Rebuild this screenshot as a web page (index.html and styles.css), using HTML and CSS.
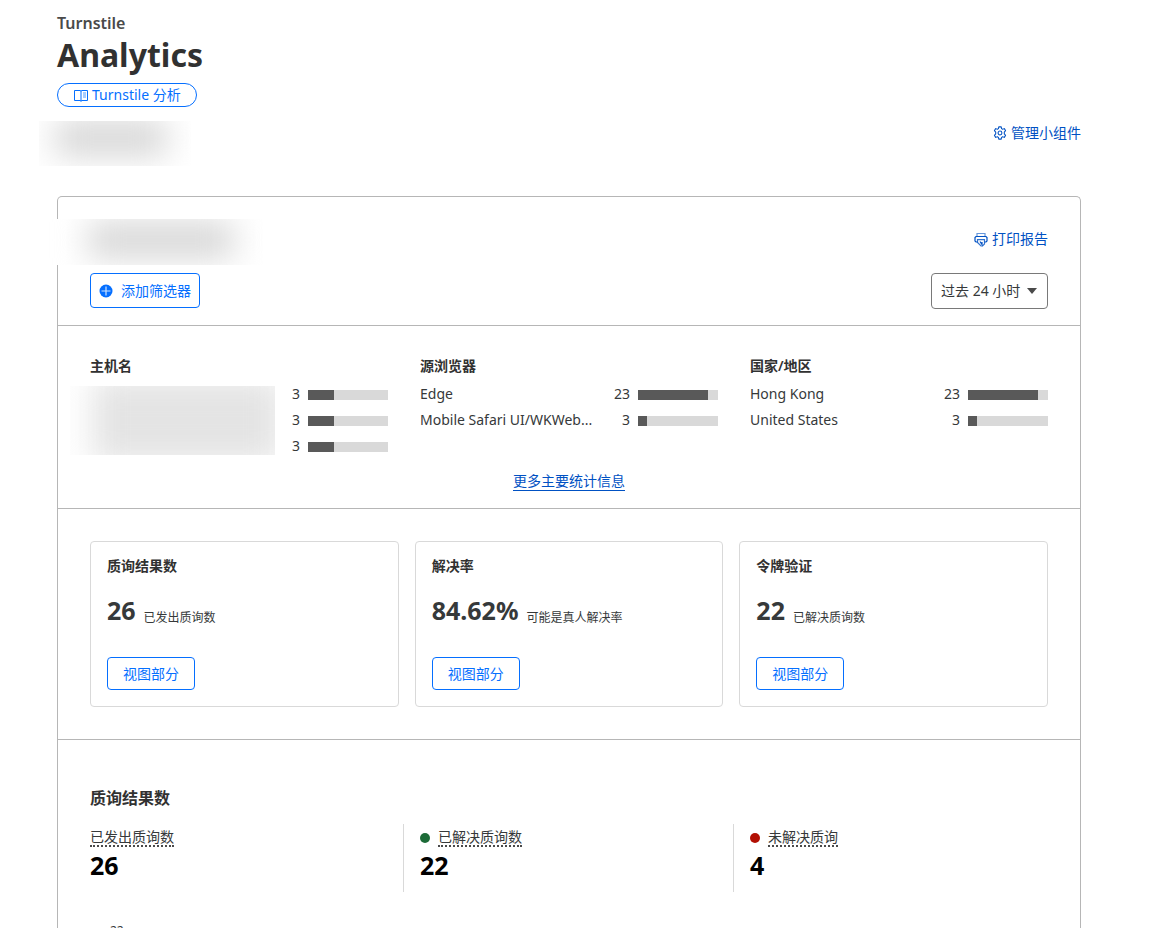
FILE: index.html
```html
<!DOCTYPE html>
<html lang="zh-CN">
<head>
  <meta charset="UTF-8">
  <meta name="viewport" content="width=device-width, initial-scale=1.0">
  <title>Turnstile Analytics</title>
  <link rel="stylesheet" href="styles.css">
</head>
<body>
  <main class="page">
    <header class="page-header">
      <p class="product">Turnstile</p>
      <h1>Analytics</h1>
      <a class="docs-link" href="#docs">
        <svg viewBox="0 0 14 13" width="14" height="13" fill="none" stroke="currentColor">
          <path d="M.5 1.500H6L7 2l1-.5h5.500v10H8l-1 .5-1-.5H.5zM7 2v10.500"/>
          <path d="M9 4h3M9 6h3M9 8h3" opacity=".7"/>
        </svg>
        Turnstile 分析
      </a>
    </header>

    <div class="account-bar">
      <div class="redacted redacted-account"></div>
      <a class="action-link" href="#widgets">
        <svg viewBox="0 0 16 16" width="14" height="14" fill="none" stroke="currentColor" stroke-width="1.200" stroke-linejoin="round">
          <path d="M6.600 1h2.800l.4 2 1.200.7 2-.7 1.400 2.400L12.900 7v2l1.500 1.600L13 13l-2-.7-1.200.7-.4 2H6.600l-.4-2-1.200-.7-2 .7-1.400-2.400L3.100 9V7L1.600 5.400 3 3l2 .7L6.200 3z"/>
          <circle cx="8" cy="8" r="2.200"/>
        </svg>
        管理小组件
      </a>
    </div>

    <div class="panel">
      <section class="toolbar">
        <div class="toolbar-row">
          <div class="redacted redacted-site"></div>
          <a class="action-link print-link" href="#print">
            <svg viewBox="0 0 14 15" width="14" height="15" fill="none" stroke="currentColor" stroke-width="1.200">
              <path d="M3 4.500V1.500h8v3" opacity=".6"/>
              <path d="M3.500 10H2L1 9V5.500l1-1h10l1 1V9l-1 1h-1.500"/>
              <path d="M3.500 7.600h7V12L8.500 14H7l-3.500-3.500z" opacity=".8"/>
              <path d="M6 9.500l2 3V10"/>
            </svg>
            打印报告
          </a>
        </div>
        <div class="toolbar-row">
          <button class="btn btn-filter" type="button">
            <svg viewBox="0 0 14 14" width="14" height="14">
              <circle cx="7" cy="7" r="6.500" fill="currentColor"/>
              <path d="M7 2.500v9M2.500 7h9" stroke="#fff" stroke-width="1.200" opacity=".8"/>
            </svg>
            添加筛选器
          </button>
          <div class="range">
            <select aria-label="时间范围">
              <option>过去 24 小时</option>
              <option>过去 7 天</option>
              <option>过去 30 天</option>
            </select>
            <svg viewBox="0 0 10 6" width="10" height="6"><path d="M0 0h10L5 6z" fill="currentColor"/></svg>
          </div>
        </div>
      </section>

      <section class="top-stats">
        <div class="columns">
          <div class="stat">
            <h2>主机名</h2>
            <ul class="stat-list">
              <li><span class="name"></span><span>3</span><span class="bar"><span style="width: 33%"></span></span></li>
              <li><span class="name"></span><span>3</span><span class="bar"><span style="width: 33%"></span></span></li>
              <li><span class="name"></span><span>3</span><span class="bar"><span style="width: 33%"></span></span></li>
            </ul>
            <div class="redacted redacted-hosts"></div>
          </div>
          <div class="stat">
            <h2>源浏览器</h2>
            <ul class="stat-list">
              <li><span class="name">Edge</span><span>23</span><span class="bar"><span style="width: 88%"></span></span></li>
              <li><span class="name">Mobile Safari UI/WKWeb...</span><span>3</span><span class="bar"><span style="width: 11%"></span></span></li>
            </ul>
          </div>
          <div class="stat">
            <h2>国家/地区</h2>
            <ul class="stat-list">
              <li><span class="name">Hong Kong</span><span>23</span><span class="bar"><span style="width: 88%"></span></span></li>
              <li><span class="name">United States</span><span>3</span><span class="bar"><span style="width: 11%"></span></span></li>
            </ul>
          </div>
        </div>
        <a class="more-link" href="#top">更多主要统计信息</a>
      </section>

      <section class="cards">
        <article class="card">
          <h2>质询结果数</h2>
          <p class="figure"><strong>26</strong><span>已发出质询数</span></p>
          <button class="btn" type="button">视图部分</button>
        </article>
        <article class="card">
          <h2>解决率</h2>
          <p class="figure"><strong>84.62%</strong><span>可能是真人解决率</span></p>
          <button class="btn" type="button">视图部分</button>
        </article>
        <article class="card">
          <h2>令牌验证</h2>
          <p class="figure"><strong>22</strong><span>已解决质询数</span></p>
          <button class="btn" type="button">视图部分</button>
        </article>
      </section>

      <section class="outcomes">
        <h2>质询结果数</h2>
        <div class="columns">
          <div class="metric">
            <p><span class="term">已发出质询数</span></p>
            <strong>26</strong>
          </div>
          <div class="metric">
            <p><i class="dot dot-green"></i><span class="term">已解决质询数</span></p>
            <strong>22</strong>
          </div>
          <div class="metric">
            <p><i class="dot dot-red"></i><span class="term">未解决质询</span></p>
            <strong>4</strong>
          </div>
        </div>
        <div class="chart"><span class="tick">22</span></div>
      </section>
    </div>
  </main>
</body>
</html>
```
FILE: styles.css
```css
* {
  box-sizing: border-box;
}

body {
  margin: 0;
  background: #fff;
  color: #36393a;
  font-family: "Noto Sans", "Noto Sans CJK SC", sans-serif;
  font-size: 14px;
  line-height: 20px;
}

h1, h2, p, ul {
  margin: 0;
  padding: 0;
}

h2 {
  font-size: 14px;
  line-height: 20px;
  font-weight: 600;
  color: #313131;
}

a {
  color: #0051c3;
  text-decoration: none;
}

.page {
  padding: 12px 70px 0 57px;
}

/* Page header */
.product {
  font-size: 16px;
  font-weight: 600;
  line-height: 22px;
  color: #4a4a4a;
}

h1 {
  font-size: 32px;
  line-height: 40px;
  font-weight: 700;
  color: #313131;
  margin: 1px 0 8px;
}

.docs-link {
  display: inline-flex;
  align-items: center;
  gap: 4px;
  height: 24px;
  padding: 0 15px 0 16px;
  border: 1px solid #056fff;
  border-radius: 12px;
  color: #056fff;
}

.page-header {
  display: flex;
  flex-direction: column;
  align-items: flex-start;
}

.account-bar {
  display: flex;
  justify-content: space-between;
  align-items: flex-start;
  margin: 14px 0 30px;
}

.action-link {
  display: inline-flex;
  align-items: center;
  gap: 4px;
  margin-top: 2px;
}

/* Hidden account details */
.redacted {
  overflow: hidden;
  background: #fff;
}

.redacted::before {
  content: "";
  display: block;
  background: #d6d6d6;
  filter: blur(16px);
}

.redacted-account {
  width: 152px;
  height: 45px;
  margin-left: -18px;
}

.redacted-account::before {
  width: 112px;
  height: 36px;
  margin: -1px 0 0 16px;
}

.redacted-site {
  width: 220px;
  height: 46px;
  margin-left: -47px;
}

.redacted-site::before {
  width: 146px;
  height: 36px;
  margin: 3px 0 0 45px;
}

/* Panel */
.panel {
  border: 1px solid #b6b6b6;
  border-bottom: 0;
  border-radius: 5px 5px 0 0;
}

.panel > section {
  padding: 32px;
}

.panel > section + section {
  border-top: 1px solid #b6b6b6;
}

.panel > .toolbar {
  padding: 22px 32px 16px;
}

.toolbar-row {
  display: flex;
  justify-content: space-between;
  align-items: flex-start;
}

.toolbar-row + .toolbar-row {
  margin-top: 8px;
}

.print-link {
  margin-top: 10px;
}

.btn {
  height: 33px;
  padding: 0 15px;
  border: 1px solid #056fff;
  border-radius: 4px;
  background: #fff;
  color: #056fff;
  font: inherit;
  cursor: pointer;
}

.btn-filter {
  display: flex;
  align-items: center;
  gap: 8px;
  height: 35px;
  padding: 0 8px;
}

.range {
  display: grid;
  align-items: center;
}

.range select,
.range svg {
  grid-area: 1 / 1;
}

.range select {
  appearance: none;
  height: 36px;
  padding: 0 26px 0 9px;
  border: 1px solid #797979;
  border-radius: 4px;
  background: #fff;
  color: #36393a;
  font: inherit;
}

.range svg {
  justify-self: end;
  margin-right: 11px;
  color: #4a4a4a;
  pointer-events: none;
}

/* Top statistics */
.columns {
  display: grid;
  grid-template-columns: repeat(3, minmax(0, 1fr));
  gap: 32px;
}

.panel > .top-stats {
  padding: 30px 32px 17px;
  text-align: center;
}

.stat {
  position: relative;
  text-align: left;
}

.stat-list {
  list-style: none;
  margin-top: 5px;
}

.stat-list li {
  display: flex;
  align-items: center;
  gap: 8px;
  height: 26px;
}

.name {
  flex: 1;
  min-width: 0;
  white-space: nowrap;
}

.bar {
  width: 80px;
  height: 10px;
  margin-top: 2px;
  background: #d9d9d9;
}

.bar span {
  display: block;
  height: 100%;
  background: #595959;
}

.redacted-hosts {
  position: absolute;
  top: 30px;
  left: -20px;
  width: 205px;
  height: 69px;
}

.redacted-hosts::before {
  width: 190px;
  height: 85px;
  margin: -8px 0 0 22px;
  background: #e4e4e4;
}

.more-link {
  display: inline-block;
  margin-top: 12px;
  line-height: 19px;
  border-bottom: 1px solid #0051c3;
}

/* Summary cards */
.cards {
  display: grid;
  grid-template-columns: repeat(3, minmax(0, 1fr));
  gap: 16px;
}

.card {
  padding: 14px 16px 16px;
  border: 1px solid #d9d9d9;
  border-radius: 4px;
}

.figure {
  display: flex;
  align-items: flex-end;
  gap: 8px;
  margin: 16px 0 29px;
}

.figure strong {
  font-size: 25px;
  font-weight: 700;
  line-height: 36px;
}

.figure span {
  font-size: 12px;
  line-height: 20px;
}

/* Challenge outcomes */
.panel > .outcomes {
  padding: 46px 32px 0;
}

.outcomes h2 {
  font-size: 16px;
  line-height: 24px;
  margin-bottom: 14px;
}

.metric {
  height: 68px;
  padding-top: 5px;
}

.metric + .metric {
  margin-left: -17px;
  padding-left: 16px;
  border-left: 1px solid #d9d9d9;
}

.metric p {
  display: flex;
  align-items: center;
  gap: 8px;
}

.metric strong {
  display: block;
  font-size: 25px;
  font-weight: 700;
  line-height: 36px;
  color: #000;
}

.term {
  line-height: 16px;
  border-bottom: 2px dotted #4a4a4a;
}

.dot {
  width: 10px;
  height: 10px;
  border-radius: 50%;
}

.dot-green {
  background: #1c6b37;
}

.dot-red {
  background: #b20f03;
}

.chart {
  padding: 28px 0 0 20px;
}

.tick {
  font-size: 12px;
}
```
